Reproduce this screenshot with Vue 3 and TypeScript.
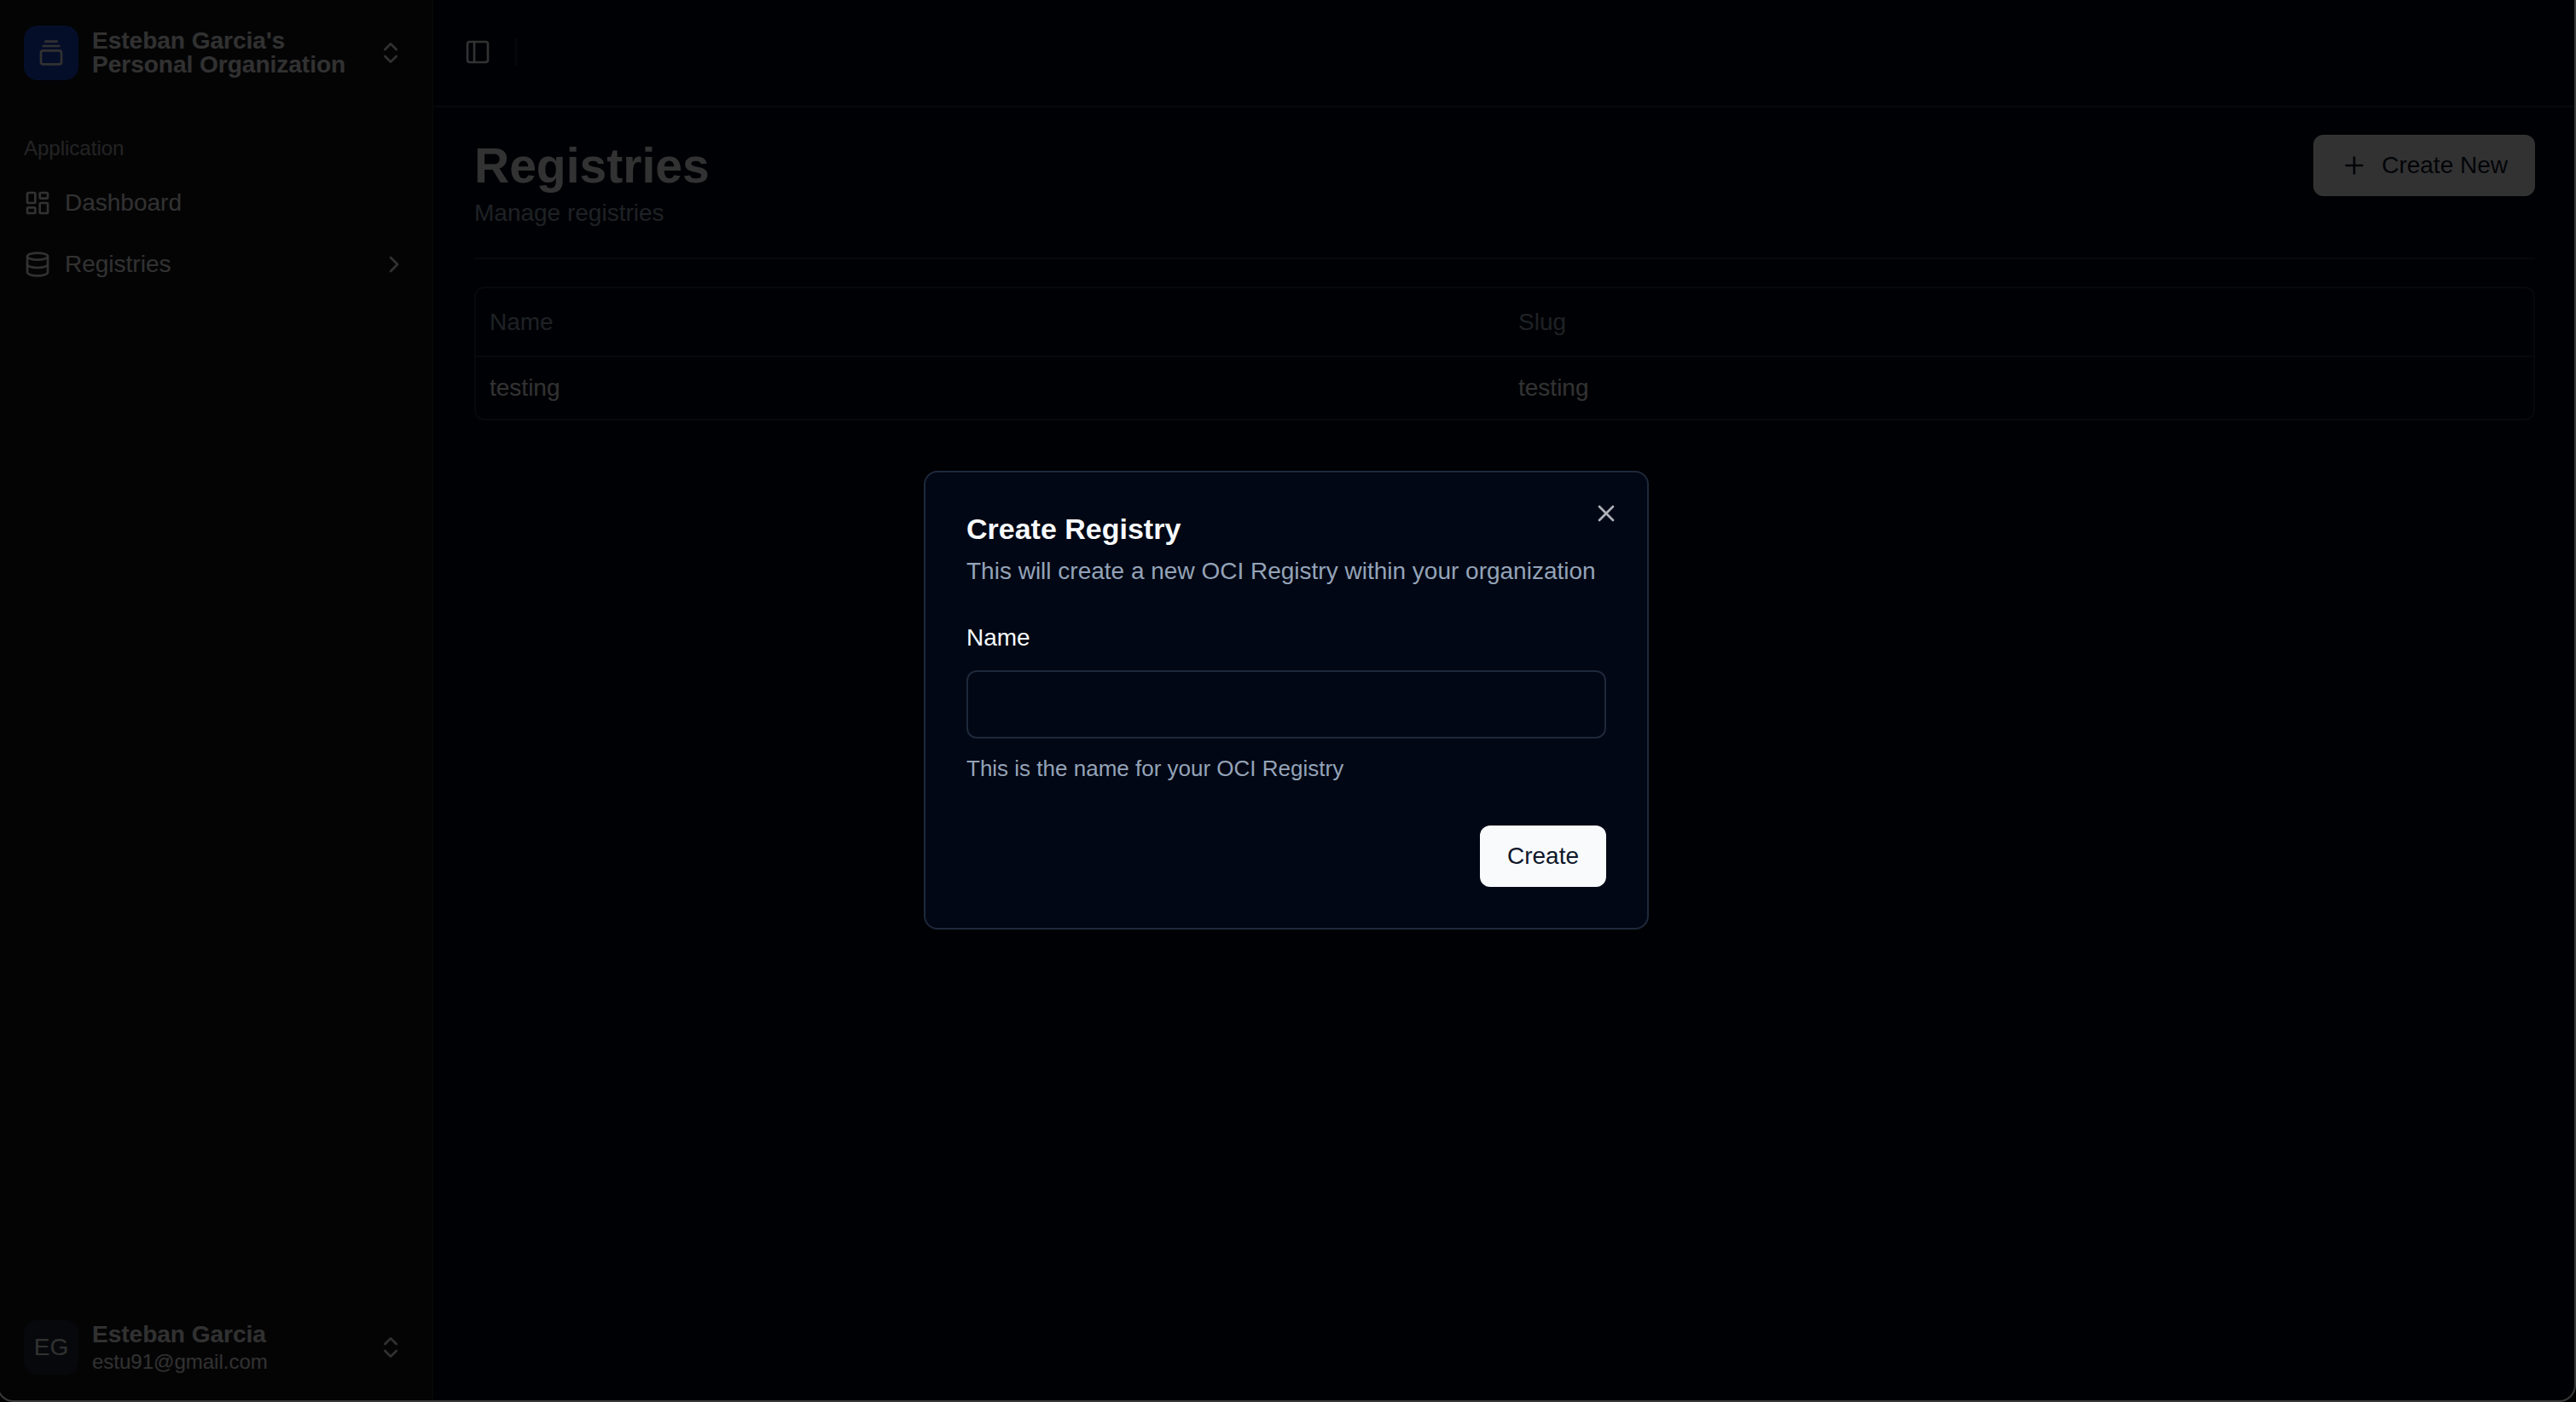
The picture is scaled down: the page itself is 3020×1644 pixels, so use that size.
<script setup lang="ts">
import { ref } from 'vue'

interface Registry {
  name: string
  slug: string
}

const registries: Registry[] = [{ name: 'testing', slug: 'testing' }]
const registryName = ref('')
const dialogOpen = ref(true)
</script>

<template>
  <div class="app">
    <aside class="sidebar">
      <button type="button" class="account account-top">
        <span class="logo">
          <svg class="icon" viewBox="0 0 24 24" aria-hidden="true">
            <path d="M7 2h10" /><path d="M5 6h14" />
            <rect width="18" height="12" x="3" y="10" rx="2" />
          </svg>
        </span>
        <span class="org">Esteban Garcia's Personal Organization</span>
        <svg class="icon" viewBox="0 0 24 24" aria-hidden="true">
          <path d="m7 15 5 5 5-5" /><path d="m7 9 5-5 5 5" />
        </svg>
      </button>

      <nav class="nav" aria-labelledby="nav-title">
        <div id="nav-title" class="nav-title">Application</div>
        <ul>
          <li>
            <a href="#dashboard">
              <svg class="icon" viewBox="0 0 24 24" aria-hidden="true">
                <rect width="7" height="9" x="3" y="3" rx="1" />
                <rect width="7" height="5" x="14" y="3" rx="1" />
                <rect width="7" height="9" x="14" y="12" rx="1" />
                <rect width="7" height="5" x="3" y="16" rx="1" />
              </svg>
              <span class="nav-text">Dashboard</span>
            </a>
          </li>
          <li>
            <a href="#registries">
              <svg class="icon" viewBox="0 0 24 24" aria-hidden="true">
                <ellipse cx="12" cy="5" rx="9" ry="3" />
                <path d="M3 5V19A9 3 0 0 0 21 19V5" />
                <path d="M3 12A9 3 0 0 0 21 12" />
              </svg>
              <span class="nav-text">Registries</span>
              <svg class="icon" viewBox="0 0 24 24" aria-hidden="true"><path d="m9 18 6-6-6-6" /></svg>
            </a>
          </li>
        </ul>
      </nav>

      <button type="button" class="account account-bottom">
        <span class="avatar">EG</span>
        <span class="user">
          <span class="user-name">Esteban Garcia</span>
          <span class="user-mail">estu91@gmail.com</span>
        </span>
        <svg class="icon" viewBox="0 0 24 24" aria-hidden="true">
          <path d="m7 15 5 5 5-5" /><path d="m7 9 5-5 5 5" />
        </svg>
      </button>
    </aside>

    <div class="main">
      <header class="topbar">
        <button type="button" class="toggle" aria-label="Toggle sidebar">
          <svg class="icon" viewBox="0 0 24 24" aria-hidden="true">
            <rect width="18" height="18" x="3" y="3" rx="2" /><path d="M9 3v18" />
          </svg>
        </button>
        <span class="divider"></span>
      </header>

      <main class="content">
        <div class="page-head">
          <div>
            <h1>Registries</h1>
            <p>Manage registries</p>
          </div>
          <button type="button" class="btn btn-new" @click="dialogOpen = true">
            <svg class="icon" viewBox="0 0 24 24" aria-hidden="true"><path d="M5 12h14" /><path d="M12 5v14" /></svg>
            Create New
          </button>
        </div>

        <div class="table-box">
          <table>
            <thead>
              <tr><th scope="col">Name</th><th scope="col">Slug</th></tr>
            </thead>
            <tbody>
              <tr v-for="r in registries" :key="r.slug">
                <td>{{ r.name }}</td>
                <td>{{ r.slug }}</td>
              </tr>
            </tbody>
          </table>
        </div>
      </main>
    </div>

    <div v-if="dialogOpen" class="overlay">
      <section class="dialog" role="dialog" aria-modal="true" aria-labelledby="dialog-title">
        <h2 id="dialog-title">Create Registry</h2>
        <p class="dialog-text">This will create a new OCI Registry within your organization</p>
        <form @submit.prevent>
          <div class="field">
            <div class="label-row"><label for="registry-name">Name</label></div>
            <input id="registry-name" v-model="registryName" type="text" aria-describedby="name-hint" />
            <p id="name-hint" class="hint">This is the name for your OCI Registry</p>
          </div>
          <div class="actions">
            <button type="submit" class="btn">Create</button>
          </div>
        </form>
        <button type="button" class="close" aria-label="Close" @click="dialogOpen = false">
          <svg class="icon" viewBox="0 0 24 24" aria-hidden="true"><path d="M18 6 6 18" /><path d="m6 6 12 12" /></svg>
        </button>
      </section>
    </div>

    <div class="window-edge"></div>
  </div>
</template>

<style>
body {
  margin: 0;
  background: #010714;
}
</style>

<style scoped>
.app {
  --background: #010714;
  --foreground: #f8fafc;
  --muted: #94a3b8;
  --border: #1e293b;
  display: flex;
  min-height: 100vh;
  background: var(--background);
  color: var(--foreground);
  font-family: "Liberation Sans", Arial, sans-serif;
  font-size: 28px;
  line-height: 40px;
}

*,
*::before,
*::after {
  box-sizing: border-box;
}

button {
  padding: 0;
  border: 0;
  background: none;
  color: inherit;
  font: inherit;
  text-align: left;
}

h1,
h2,
p,
ul {
  margin: 0;
  padding: 0;
}

.icon {
  display: block;
  flex: none;
  width: 32px;
  height: 32px;
  fill: none;
  stroke: currentColor;
  stroke-width: 2;
  stroke-linecap: round;
  stroke-linejoin: round;
}

/* Sidebar */
.sidebar {
  display: flex;
  flex: none;
  flex-direction: column;
  width: 508px;
  border-right: 2px solid #27272a;
  background: #18181b;
  color: #f4f4f5;
}

.account {
  display: flex;
  align-items: center;
  gap: 16px;
  padding: 0 32px 0 28px;
}

.account-top {
  height: 124px;
}

.account-bottom {
  height: 96px;
  margin-top: auto;
  margin-bottom: 16px;
}

.logo,
.avatar {
  display: flex;
  flex: none;
  align-items: center;
  justify-content: center;
  width: 64px;
  height: 64px;
  border-radius: 16px;
}

.logo {
  background: #1d45cc;
}

.avatar {
  background: var(--border);
}

.org {
  flex: 1;
  font-weight: 700;
  line-height: 28px;
}

.user {
  display: flex;
  flex: 1;
  flex-direction: column;
}

.user-name {
  font-weight: 700;
  line-height: 34px;
}

.user-mail {
  font-size: 24px;
  line-height: 30px;
}

.nav {
  padding: 18px 28px 0;
}

.nav-title {
  color: rgba(244, 244, 245, 0.7);
  font-size: 24px;
  line-height: 64px;
}

.nav ul {
  display: flex;
  flex-direction: column;
  gap: 8px;
  list-style: none;
}

.nav a {
  display: flex;
  align-items: center;
  gap: 16px;
  height: 64px;
  color: inherit;
  text-decoration: none;
}

.nav-text {
  flex: 1;
}

/* Page */
.main {
  flex: 1;
  min-width: 0;
}

.topbar {
  display: flex;
  align-items: center;
  gap: 16px;
  height: 126px;
  padding: 0 24px 2px;
  border-bottom: 2px solid var(--border);
}

.toggle {
  padding: 12px;
}

.divider {
  width: 2px;
  height: 32px;
  background: var(--border);
}

.content {
  padding: 32px 48px;
}

.page-head {
  display: flex;
  align-items: flex-start;
  justify-content: space-between;
  padding-bottom: 32px;
  border-bottom: 2px solid var(--border);
}

h1 {
  font-size: 57px;
  font-weight: 700;
  line-height: 72px;
}

.page-head p {
  color: var(--muted);
}

.btn {
  display: flex;
  align-items: center;
  gap: 16px;
  height: 72px;
  padding: 0 32px;
  border-radius: 12px;
  background: var(--foreground);
  color: #0f172a;
}

.table-box {
  margin-top: 32px;
  border: 2px solid var(--border);
  border-radius: 12px;
}

table {
  width: 100%;
  border-spacing: 0;
  table-layout: fixed;
}

th {
  height: 81px;
  padding: 0 16px;
  border-bottom: 2px solid var(--border);
  color: var(--muted);
  font-weight: 400;
  text-align: left;
}

td {
  padding: 16px;
}

/* Dialog */
.overlay {
  position: fixed;
  inset: 0;
  display: flex;
  align-items: center;
  justify-content: center;
  padding: 0 4px 2px 0;
  background: rgba(0, 0, 0, 0.8);
}

.dialog {
  position: relative;
  width: 850px;
  padding: 48px;
  border: 2px solid var(--border);
  border-radius: 16px;
  background: var(--background);
}

h2 {
  font-size: 34px;
  font-weight: 700;
  line-height: 36px;
}

.dialog-text {
  margin-top: 12px;
  color: var(--muted);
}

form {
  display: flex;
  flex-direction: column;
  gap: 48px;
  margin-top: 32px;
}

.field {
  display: flex;
  flex-direction: column;
  gap: 16px;
}

.label-row {
  font-size: 32px;
  line-height: 48px;
}

label {
  font-size: 28px;
  line-height: 28px;
}

input {
  width: 100%;
  height: 80px;
  padding: 0 24px;
  border: 2px solid var(--border);
  border-radius: 12px;
  outline: none;
  background: var(--background);
  color: inherit;
  font: inherit;
}

.hint {
  color: var(--muted);
  font-size: 26px;
  line-height: 38px;
}

.actions {
  display: flex;
  justify-content: flex-end;
}

.close {
  position: absolute;
  top: 32px;
  right: 32px;
  opacity: 0.7;
}

/* Rounded outline of the application window */
.window-edge {
  position: fixed;
  inset: -24px 0 0 -4px;
  border: 2px solid #3a3a3a;
  border-radius: 20px;
  box-shadow: 0 0 0 20px #000;
  pointer-events: none;
}
</style>
